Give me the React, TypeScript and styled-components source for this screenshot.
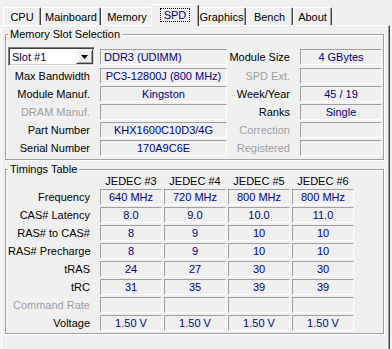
import React from "react";
import styled, {createGlobalStyle} from "styled-components";

const GlobalStyle = createGlobalStyle`
  html, body {
    margin: 0;
    padding: 0;
    background: #f0f0f0;
  }
  body {
    font-family: "Liberation Sans", Arial, sans-serif;
    font-size: 11px;
  }
`;

const Window = styled.div`
  width: 392px;
  height: 349px;
  overflow: hidden;
  background: #f0f0f0;
  color: #000;
`;

const TabBar = styled.div`
  display: flex;
  align-items: flex-end;
  height: 25px;
  padding-left: 3px;
  position: relative;
  z-index: 1;
`;

const Tab = styled.div<{ $w: number; $active?: boolean }>`
  box-sizing: border-box;
  flex: none;
  width: ${p => p.$w + (p.$active ? 4 : 0)}px;
  height: ${p => (p.$active ? 22 : 18)}px;
  margin: 0 ${p => (p.$active ? -2 : 0)}px ${p => (p.$active ? -1 : 0)}px;
  padding-bottom: ${p => (p.$active ? 2 : 0)}px;
  display: flex;
  align-items: center;
  justify-content: center;
  background: #f0f0f0;
  border-top: 1px solid #fff;
  border-left: 1px solid #fff;
  border-right: 1px solid #404040;
  box-shadow: inset -1px 0 0 #a0a0a0;
  border-radius: 2px 2px 0 0;
  color: ${p => (p.$active ? "#000080" : "#000")};
  position: relative;
  z-index: ${p => (p.$active ? 2 : 1)};
  white-space: nowrap;
`;

const Focus = styled.span`
  outline: 1px dotted #000;
  outline-offset: 0;
  padding: 0 3px;
  line-height: 12px;
`;

const Panel = styled.div`
  box-sizing: border-box;
  margin-left: 1px;
  width: 389px;
  height: 330px;
  border-top: 1px solid #fff;
  border-left: 1px solid #fff;
  border-right: 1px solid #404040;
  border-bottom: 1px solid #404040;
  box-shadow: inset -1px -1px 0 #a0a0a0;
  padding: 2px 0 0 3px;
`;

const Group = styled.fieldset<{ $top: number; $pt: number; $pb: number }>`
  box-sizing: border-box;
  width: 379px;
  min-width: 0;
  margin: ${p => p.$top}px 0 0;
  border: 1px solid #a0a0a0;
  box-shadow: inset 1px 1px 0 #fff, 1px 1px 0 #fff;
  padding: ${p => p.$pt}px 0 ${p => p.$pb}px 2px;
`;

const Legend = styled.legend`
  padding: 0 2px;
  margin: 0;
  line-height: 12px;
  background: #f0f0f0;
`;

const SlotGrid = styled.div`
  display: grid;
  grid-template-columns: 92px 127px 73px 82px;
  grid-template-rows: 19px repeat(5, 16px);
  row-gap: 2px;
  align-items: center;
`;

const TimingGrid = styled.div`
  display: grid;
  grid-template-columns: 90px repeat(4, 62px);
  grid-template-rows: 12px repeat(8, 16px);
  column-gap: 2px;
  row-gap: 2px;
  align-items: center;
`;

const Label = styled.div<{ $disabled?: boolean }>`
  text-align: right;
  padding-right: ${p => (p.$disabled !== undefined ? 10 : 10)}px;
  color: ${p => (p.$disabled ? "#a0a0a0" : "#000")};
  white-space: nowrap;
`;

const RowLabel = styled(Label)`
  padding-right: 8px;
`;

const Head = styled.div`
  text-align: center;
  white-space: nowrap;
  line-height: 12px;
`;

const Field = styled.div<{ $left?: boolean }>`
  box-sizing: border-box;
  height: 16px;
  border-top: 1px solid #a0a0a0;
  border-left: 1px solid #a0a0a0;
  border-bottom: 1px solid #fff;
  border-right: 1px solid #fff;
  color: #000080;
  text-align: ${p => (p.$left ? "left" : "center")};
  line-height: 14px;
  padding: 0 3px;
  white-space: nowrap;
  overflow: hidden;
`;

const Combo = styled.div`
  box-sizing: border-box;
  width: 87px;
  height: 19px;
  display: flex;
  align-items: center;
  background: #fff;
  border: 1px solid;
  border-color: #808080 #fff #fff #808080;
  box-shadow: inset 1px 1px 0 #404040, inset -1px -1px 0 #d4d0c8;
  padding: 0 1px 0 3px;
  color: #00004a;
`;

const DropButton = styled.div`
  box-sizing: border-box;
  margin-left: auto;
  width: 17px;
  height: 15px;
  display: flex;
  align-items: center;
  justify-content: center;
  background: #f0f0f0;
  border: 1px solid;
  border-color: #f0f0f0 #404040 #404040 #f0f0f0;
  box-shadow: inset 1px 1px 0 #fff, inset -1px -1px 0 #a0a0a0;
`;

const tabs = [
  {name: "CPU", w: 38},
  {name: "Mainboard", w: 60},
  {name: "Memory", w: 52},
  {name: "SPD", w: 44},
  {name: "Graphics", w: 49},
  {name: "Bench", w: 47},
  {name: "About", w: 39},
];

const leftRows: [string, string, boolean, boolean][] = [
  ["Max Bandwidth", "PC3-12800J (800 MHz)", false, false],
  ["Module Manuf.", "Kingston", false, false],
  ["DRAM Manuf.", "", true, false],
  ["Part Number", "KHX1600C10D3/4G", false, false],
  ["Serial Number", "170A9C6E", false, false],
];

const rightRows: [string, string, boolean][] = [
  ["Module Size", "4 GBytes", false],
  ["SPD Ext.", "", true],
  ["Week/Year", "45 / 19", false],
  ["Ranks", "Single", false],
  ["Correction", "", true],
  ["Registered", "", true],
];

const timings: [string, string[], boolean][] = [
  ["Frequency", ["640 MHz", "720 MHz", "800 MHz", "800 MHz"], false],
  ["CAS# Latency", ["8.0", "9.0", "10.0", "11.0"], false],
  ["RAS# to CAS#", ["8", "9", "10", "10"], false],
  ["RAS# Precharge", ["8", "9", "10", "10"], false],
  ["tRAS", ["24", "27", "30", "30"], false],
  ["tRC", ["31", "35", "39", "39"], false],
  ["Command Rate", ["", "", "", ""], true],
  ["Voltage", ["1.50 V", "1.50 V", "1.50 V", "1.50 V"], false],
];

const App = () => {
  return (
    <Window>
      <GlobalStyle/>
      <TabBar>
        {tabs.map(t => (
          <Tab key={t.name} $w={t.w} $active={t.name === "SPD"}>
            {t.name === "SPD" ? <Focus>{t.name}</Focus> : t.name}
          </Tab>
        ))}
      </TabBar>
      <Panel>
        <Group $top={0} $pt={7} $pb={3}>
          <Legend>Memory Slot Selection</Legend>
          <SlotGrid>
            <Combo>
              Slot #1
              <DropButton>
                <svg width="7" height="4" viewBox="0 0 7 4">
                  <polygon points="0,0 7,0 3.5,4" fill="#000"/>
                </svg>
              </DropButton>
            </Combo>
            <Field $left>DDR3 (UDIMM)</Field>
            <Label $disabled={rightRows[0][2]}>{rightRows[0][0]}</Label>
            <Field>{rightRows[0][1]}</Field>
            {leftRows.map((r, i) => (
              <React.Fragment key={r[0]}>
                <Label $disabled={r[2]}>{r[0]}</Label>
                <Field>{r[1]}</Field>
                <Label $disabled={rightRows[i + 1][2]}>{rightRows[i + 1][0]}</Label>
                <Field>{rightRows[i + 1][1]}</Field>
              </React.Fragment>
            ))}
          </SlotGrid>
        </Group>
        <Group $top={3} $pt={0} $pb={2}>
          <Legend>Timings Table</Legend>
          <TimingGrid>
            <div/>
            {["JEDEC #3", "JEDEC #4", "JEDEC #5", "JEDEC #6"].map(h => (
              <Head key={h}>{h}</Head>
            ))}
            {timings.map(([label, values, disabled]) => (
              <React.Fragment key={label}>
                <RowLabel $disabled={disabled}>{label}</RowLabel>
                {values.map((v, i) => (
                  <Field key={i}>{v}</Field>
                ))}
              </React.Fragment>
            ))}
          </TimingGrid>
        </Group>
      </Panel>
    </Window>
  );
};

export default App;
